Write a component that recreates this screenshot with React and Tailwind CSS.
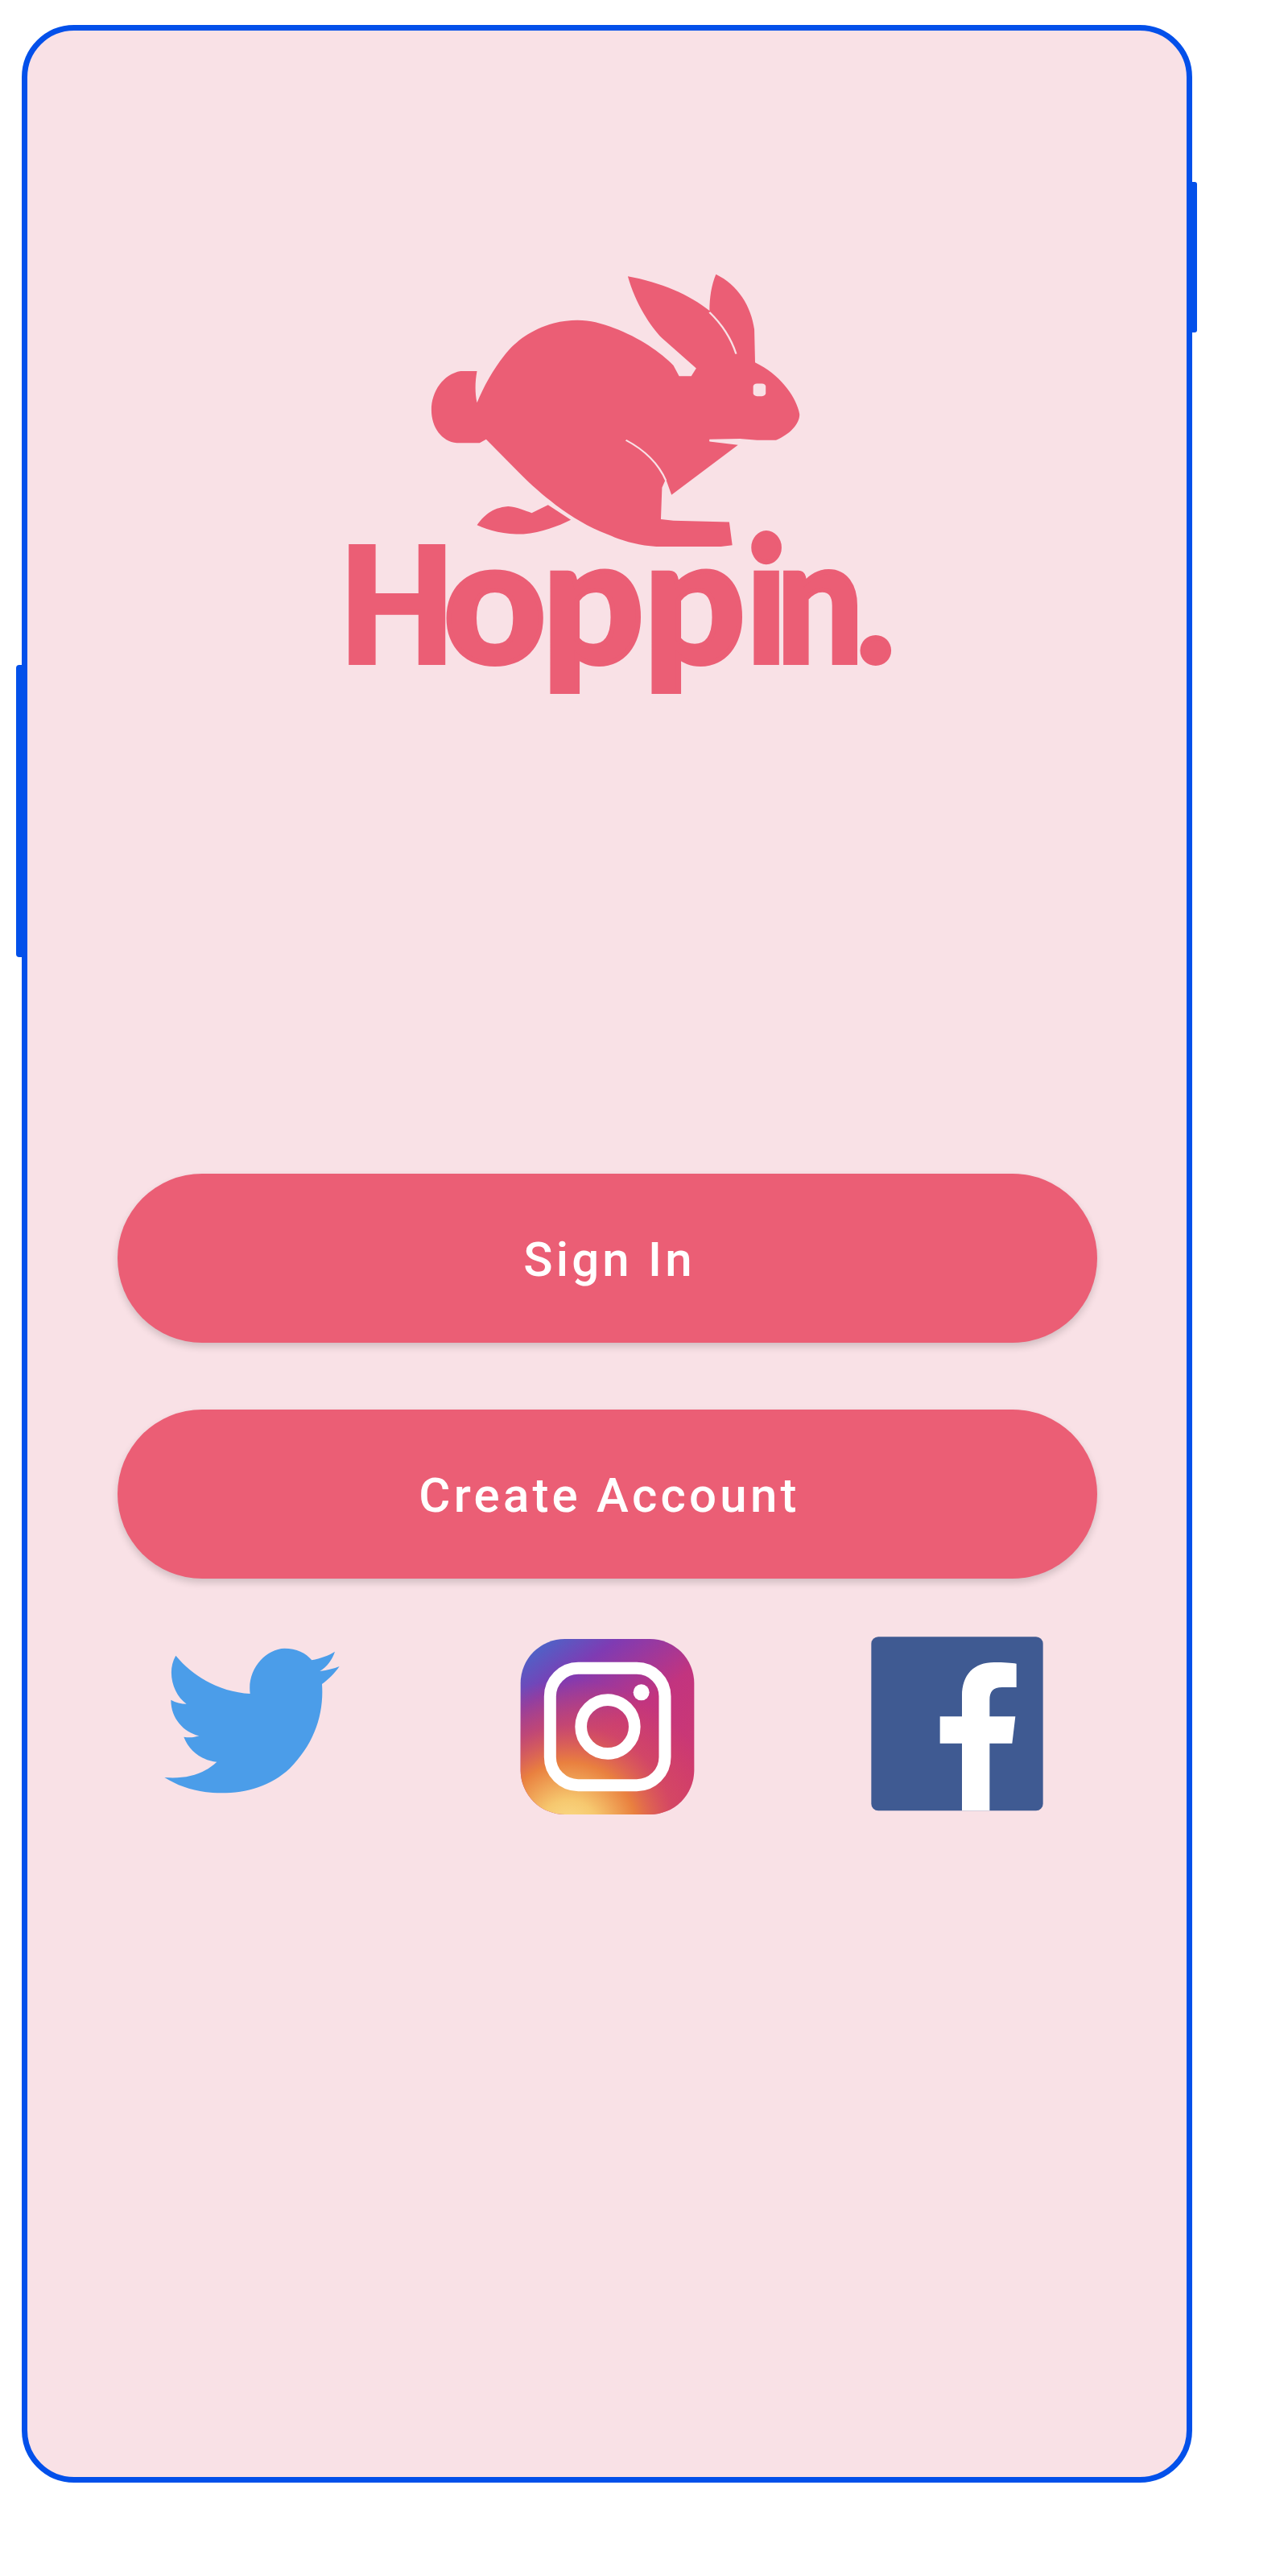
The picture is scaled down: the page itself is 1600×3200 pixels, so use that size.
const PINK = "#eb5e75";
const BG = "#f9e1e6";

function Logo() {
  return (
    <div className="relative w-[740px] h-[560px] ml-[366px]">
      {/* rabbit traced at 1568x1568, squeezed back into 740x560 */}
      <svg viewBox="0 0 1568 1568" preserveAspectRatio="none" className="absolute inset-0 w-full h-full">
        <path
          fill={PINK}
          d="M408 395 L365 395 C320 405 288 465 288 530 C288 590 315 640 355 645 L415 645 L432 632 L520 750 C550 790 580 825 615 860 C660 905 700 935 750 962 C790 985 830 1000 880 1005 L1050 1005 L1080 1000 L1072 920 L925 915 L892 910 L895 800 L905 770 L920 825 L1095 652 L1020 640 L1020 632 L1100 630 L1145 635 L1195 635 C1230 615 1257 580 1257 545 C1250 490 1210 410 1140 365 L1138 250 C1130 170 1095 95 1037 58 C1025 95 1020 140 1020 185 C970 130 890 85 805 65 C825 160 865 240 895 280 L985 385 L972 412 L940 412 L925 375 C885 320 810 255 720 225 C690 215 650 215 610 228 C550 250 510 290 480 340 C450 390 425 450 408 505 C402 470 403 430 408 395 Z"
        />
        <path
          fill={PINK}
          d="M408 930 C425 900 445 870 490 865 C515 868 535 880 552 888 L595 860 L655 912 C620 935 580 955 530 962 C480 962 440 950 408 930 Z"
        />
        <path fill="none" stroke={BG} strokeWidth="5" d="M1020 190 C1055 235 1078 285 1090 335" />
        <path fill="none" stroke={BG} strokeWidth="5" d="M800 635 C850 670 885 715 905 775" />
        <path fill="none" stroke={BG} strokeWidth="5" d="M1020 636 L1098 640" />
        <rect x="1135" y="438" width="33" height="44" rx="10" fill={BG} />
      </svg>
      {/* wordmark: Lato thickened with a stroke, squeezed per group to sit on the logo's letters */}
      <svg viewBox="0 0 740 560" className="absolute inset-0 w-full h-full">
        <g fill={PINK} stroke={PINK} strokeWidth="6" className="font-['Lato',sans-serif] font-black">
          <text transform="translate(22 503) scale(0.93 1)" fontSize="198">H</text>
          <text transform="translate(151 503) scale(1.025 1)" fontSize="215" x="0 120 243">opp</text>
          <text transform="translate(527.5 503) scale(0.88 1)" fontSize="215" x="0 42.6">in</text>
          <text transform="translate(664 503)" fontSize="200">.</text>
        </g>
      </svg>
    </div>
  );
}

function PillButton({ label, className }) {
  return (
    <button
      className={`w-[1217px] h-[210px] ml-[112px] rounded-full bg-[#eb5e75] shadow-[0_5px_10px_rgba(0,0,0,0.16)] text-white text-[60px] pt-[3px] pl-[5px] font-medium tracking-[0.07em] font-['Roboto',sans-serif] ${className}`}
    >
      {label}
    </button>
  );
}

function TwitterBird() {
  return (
    <svg viewBox="0 0 900 810" className="w-[300px] h-[270px]">
      <path
        fill="#4b9de9"
        d="M115 140 C190 230 290 275 392 282 C380 190 450 115 520 113 C565 113 600 130 622 157 C655 150 685 140 708 125 C698 155 680 180 652 198 C680 195 705 188 725 180 C705 208 685 228 660 246 C668 360 630 470 540 560 C470 625 380 652 285 652 C200 652 130 630 73 594 C150 600 215 585 268 536 C210 530 165 495 145 443 C165 447 185 445 202 439 C145 425 97 375 97 305 C115 315 135 320 155 320 C105 285 80 200 115 140 Z"
      />
    </svg>
  );
}

function InstagramLogo() {
  return (
    <svg viewBox="0 0 840 810" className="w-[280px] h-[270px]">
      <defs>
        <linearGradient id="igBase" x1="0.12" y1="0" x2="0.8" y2="0.95">
          <stop offset="0" stopColor="#4a66c9" />
          <stop offset="0.22" stopColor="#7f3bb3" />
          <stop offset="0.55" stopColor="#c2347f" />
          <stop offset="1" stopColor="#cf3a6f" />
        </linearGradient>
        <radialGradient id="igGlow" gradientUnits="userSpaceOnUse" cx="260" cy="790" r="560">
          <stop offset="0" stopColor="#fbe08f" />
          <stop offset="0.2" stopColor="#f6c86f" />
          <stop offset="0.45" stopColor="#e9803f" />
          <stop offset="0.7" stopColor="#d8505c" stopOpacity="0.6" />
          <stop offset="1" stopColor="#d94a5a" stopOpacity="0" />
        </radialGradient>
      </defs>
      <rect x="80" y="78" width="647" height="654" rx="165" fill="url(#igBase)" />
      <rect x="80" y="78" width="647" height="654" rx="165" fill="url(#igGlow)" />
      <rect x="190" y="187" width="428" height="436" rx="105" fill="none" stroke="#fff" strokeWidth="45" />
      <circle cx="405" cy="405" r="100" fill="none" stroke="#fff" strokeWidth="44" />
      <circle cx="530" cy="277" r="30" fill="#fff" />
    </svg>
  );
}

function FacebookLogo() {
  return (
    <svg viewBox="0 0 840 810" className="w-[280px] h-[270px]">
      <rect x="97" y="70" width="640" height="648" rx="26" fill="#3f5a92" />
      <path
        fill="#fff"
        d="M435 718 L435 467 L353 467 L353 367 L435 367 L435 290 C435 210 480 165 555 165 C590 165 620 167 638 170 L638 258 L585 258 C550 258 538 275 538 305 L538 367 L634 367 L622 467 L538 467 L538 718 Z"
      />
    </svg>
  );
}

export default function App() {
  return (
    <div className="min-h-[3200px] bg-white pt-[31px] pl-[27px]">
      <div className="relative w-[1454px] h-[3053px] rounded-[65px] border-[7px] border-[#0350ea] bg-[#f9e1e6] pt-[282px]">
        {/* side keys of the phone frame */}
        <div className="absolute left-[1447px] top-[188px] w-[6px] h-[187px] rounded-r-[3px] bg-[#0350ea]" />
        <div className="absolute -left-[14px] top-[788px] w-[7px] h-[363px] rounded-l-[4px] bg-[#0350ea]" />

        <Logo />
        <div className="flex flex-col items-start">
          <PillButton label="Sign In" className="mt-[578px]" />
          <PillButton label="Create Account" className="mt-[83px]" />
        </div>
        <div className="flex mt-[49px] ml-[146px]">
          <TwitterBird />
          <div className="ml-[140px]">
            <InstagramLogo />
          </div>
          <div className="ml-[150px]">
            <FacebookLogo />
          </div>
        </div>
      </div>
    </div>
  );
}
